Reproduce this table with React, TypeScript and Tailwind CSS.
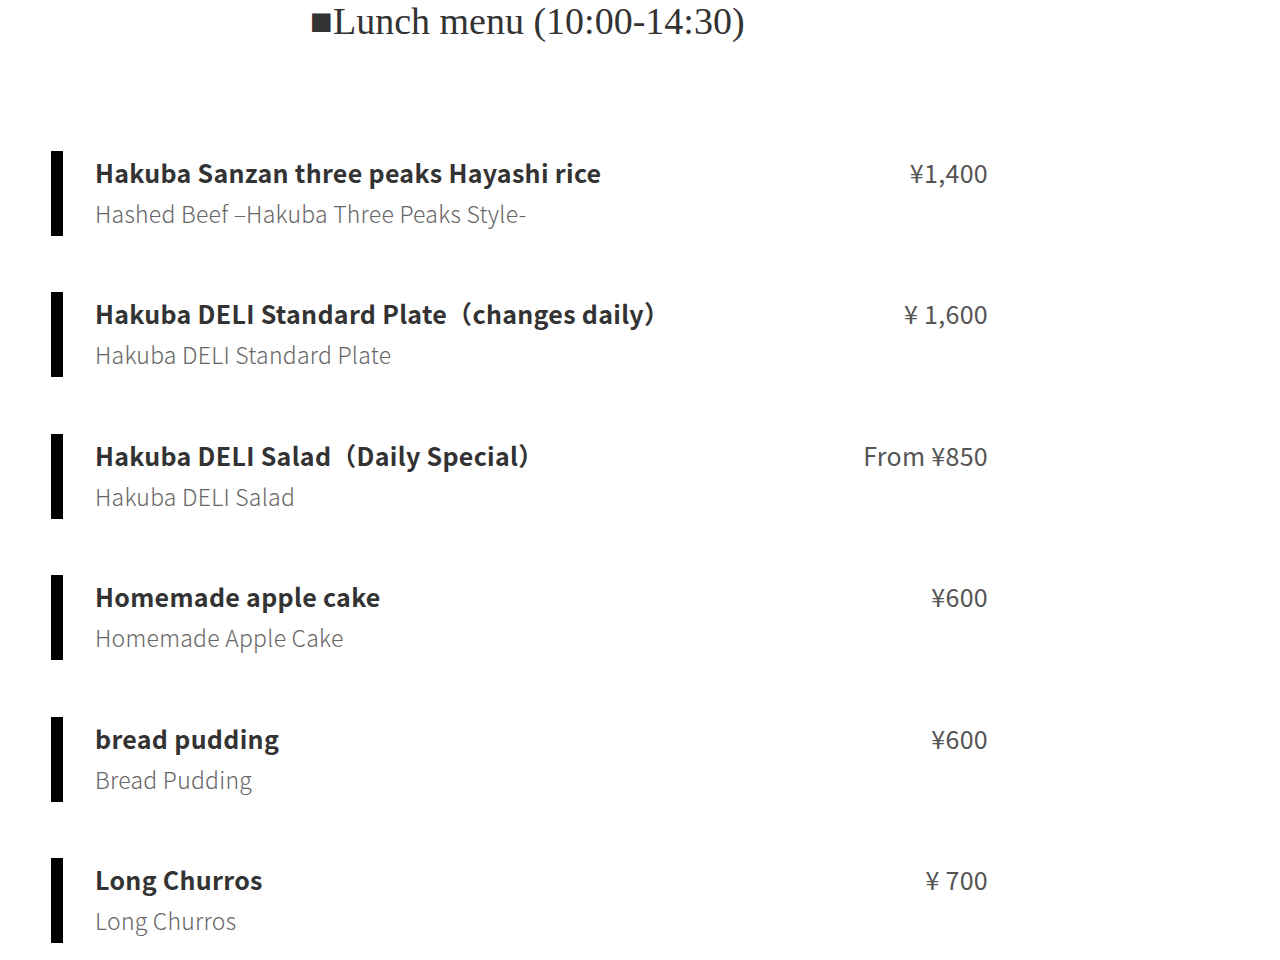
const items = [
	{ name: "Hakuba Sanzan three peaks Hayashi rice", sub: "Hashed Beef –Hakuba Three Peaks Style-", price: "¥1,400" },
	{ name: "Hakuba DELI Standard Plate（changes daily）", sub: "Hakuba DELI Standard Plate", price: "¥ 1,600" },
	{ name: "Hakuba DELI Salad（Daily Special）", sub: "Hakuba DELI Salad", price: "From ¥850" },
	{ name: "Homemade apple cake", sub: "Homemade Apple Cake", price: "¥600" },
	{ name: "bread pudding", sub: "Bread Pudding", price: "¥600" },
	{ name: "Long Churros", sub: "Long Churros", price: "¥ 700" },
];

export default function App() {
	return (
		<div className="min-h-screen bg-white">
			{/* Heading */}
			<h2 className="pl-[310px] pt-0 text-[38px] leading-[42px] text-[#333] font-['Liberation_Serif','DejaVu_Serif',serif]">
				■Lunch menu (10:00-14:30)
			</h2>

			{/* Menu list */}
			<ul className="mt-[109px] ml-[51px] w-[937px] flex flex-col gap-[56.4px] font-['Noto_Sans_CJK_JP','Noto_Sans',sans-serif]">
				{items.map((item, i) => (
					<li key={i} className="flex items-start">
						<div className="w-[12px] h-[85px] bg-black shrink-0" />
						<div className="ml-[32px] flex-1 pt-[3px]">
							<div className="flex justify-between items-baseline">
								<span className="text-[25px] leading-[36px] font-bold tracking-[0.3px] text-[#333]">
									{item.name}
								</span>
								<span className="text-[25px] leading-[36px] tracking-[0.3px] text-[#555]">
									{item.price}
								</span>
							</div>
							<p className="mt-[7px] text-[23px] leading-[32px] font-light tracking-[0.25px] text-[#666]">
								{item.sub}
							</p>
						</div>
					</li>
				))}
			</ul>
		</div>
	);
}
